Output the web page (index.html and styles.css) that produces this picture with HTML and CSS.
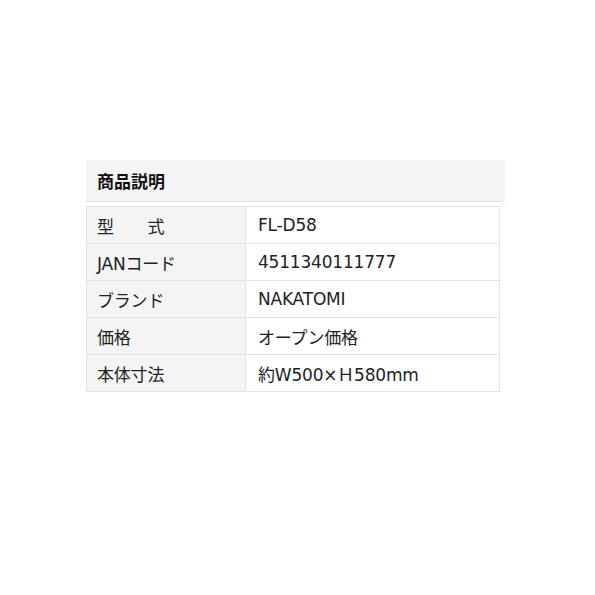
FILE: index.html
```html
<!DOCTYPE html>
<html lang="ja">
<head>
<meta charset="utf-8">
<link rel="stylesheet" href="styles.css">
</head>
<body>
<div class="wrap">
  <h2 class="title">商品説明</h2>
  <table class="spec">
    <tr><th>型　　式</th><td>FL-D58</td></tr>
    <tr><th>JANコード</th><td>4511340111777</td></tr>
    <tr><th>ブランド</th><td>NAKATOMI</td></tr>
    <tr><th>価格</th><td>オープン価格</td></tr>
    <tr><th>本体寸法</th><td>約W500×Ｈ580mm</td></tr>
  </table>
</div>
</body>
</html>
```
FILE: styles.css
```css
html, body { margin: 0; padding: 0; background: #fff; }
body {
  font-family: "DejaVu Sans", "Noto Sans CJK JP", sans-serif;
  color: #222;
}
.wrap {
  margin: 160px 0 0 86px;
  width: 419px;
}
.title {
  margin: 0;
  height: 42px;
  box-sizing: border-box;
  padding: 0 11px;
  display: flex;
  align-items: center;
  background: #f4f4f4;
  border-bottom: 1px solid #e2e2e2;
  font-family: "Noto Sans CJK JP", sans-serif;
  font-size: 17px;
  font-weight: bold;
  color: #111;
}
.spec {
  margin-top: 4px;
  width: 414px;
  border-collapse: collapse;
  font-size: 17px;
}
.spec th, .spec td {
  border: 1px solid #e2e2e2;
  height: 37px;
  padding: 0 12px;
  text-align: left;
  font-weight: normal;
  box-sizing: border-box;
  letter-spacing: -0.2px;
}
.spec th {
  width: 159px;
  background: #f4f4f4;
  padding-left: 10px;
}
.spec td { background: #fff; }
```
